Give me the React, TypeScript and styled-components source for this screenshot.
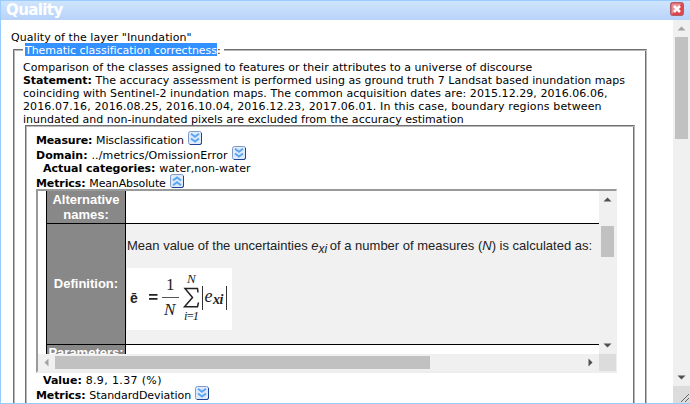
import React from "react";
import styled, { createGlobalStyle } from "styled-components";

const Global = createGlobalStyle`
  * { box-sizing: border-box; }
  html, body { margin: 0; padding: 0; overflow: hidden; background: #fff; }
`;

const Dialog = styled.div`
  width: 690px;
  height: 404px;
  display: flex;
  flex-direction: column;
  border: 1px solid #99ccff;
  border-right: 0;
  background: #fff;
  color: #000;
  overflow: hidden;
  font: 11px/15px Verdana, "DejaVu Sans", sans-serif;
`;

const TitleBar = styled.header`
  flex: 0 0 19px;
  display: flex;
  justify-content: space-between;
  padding: 1px 6px 0 5px;
  background: linear-gradient(#cfe5fd, #b9d2f9);
`;

const Title = styled.h1`
  margin: 0;
  color: #fff;
  font-size: 15px;
  line-height: 16px;
  letter-spacing: -0.6px;
`;

const Body = styled.div`
  flex: 1;
  min-height: 0;
  display: flex;
`;

const Content = styled.main`
  flex: 1;
  min-width: 0;
  overflow: hidden;
  padding: 10px 26px 0 10px;
`;

const Line = styled.div<{ $indent?: number }>`
  height: 13px;
  white-space: pre;
  padding-left: ${(p) => p.$indent ?? 0}px;
`;

const IconLine = styled.div`
  height: 15px;
  display: flex;
  padding-top: 2px;
  white-space: pre;
`;

const Run = styled.span<{ $track?: number }>`
  letter-spacing: ${(p) => p.$track ?? 0}px;
`;

const Strong = styled(Run)`
  font-weight: bold;
`;

const Group = styled.section`
  border: 1px solid;
  border-color: #707070 #b8b8b8 #b8b8b8 #707070;
  box-shadow: inset 1px 1px 0 #b8b8b8, inset -1px -1px 0 #707070;
`;

const Outer = styled(Group)`
  width: 634px;
  height: 500px;
  margin: 6px 0 0 2px;
  padding: 0 9px;
`;

const Legend = styled.div`
  width: 201px;
  height: 13px;
  margin: -7px 0 4px 0;
  padding-left: 2px;
  background: #fff;
  display: flex;
  white-space: pre;
`;

const Selected = styled.span`
  width: 192px;
  background: #3390ff;
  color: #fff;
`;

const Inner = styled(Group)`
  width: 610px;
  height: 400px;
  margin-left: 2px;
  padding: 5px 0 0 10px;
`;

const Frame = styled.div`
  width: 581px;
  height: 184px;
  border: 2px solid;
  border-width: 2px 1px 2px 2px;
  border-color: #9a9a9a #eeeeee #eeeeee #9a9a9a;
  display: grid;
  grid-template: 163px 17px / 561px 17px;
`;

const Viewport = styled.div`
  overflow: hidden;
  padding-left: 8px;
  font: 13px/15px "Liberation Sans", Arial, sans-serif;
`;

const TableRow = styled.div<{ $height: number; $shaded?: boolean }>`
  height: ${(p) => p.$height}px;
  display: grid;
  grid-template-columns: 80px 1fr;
  border-bottom: 1px solid #000;
  background: ${(p) => (p.$shaded ? "#f1f1f1" : "#fff")};
`;

const HeadCell = styled.div<{ $top: number }>`
  border: 1px solid #000;
  border-width: 0 1px;
  background: #888;
  color: #fff;
  font-weight: bold;
  text-align: center;
  padding-top: ${(p) => p.$top}px;
`;

const Cell = styled.div`
  padding: 14px 0 0 1px;
`;

const Sentence = styled.div`
  height: 30px;
  white-space: pre;
  color: #222;

  sub {
    font-size: 12px;
    font-style: italic;
    line-height: 0;
    vertical-align: -3px;
    margin-right: -1px;
  }
`;

const Corner = styled.div`
  display: flex;
  align-items: flex-end;
  justify-content: flex-end;
  background: #dcdcdc;
`;

const Track = styled.div<{ $row?: boolean }>`
  display: flex;
  flex-direction: ${(p) => (p.$row ? "row" : "column")};
  align-items: center;
  background: #f0f0f0;
  min-height: 0;
  flex: 1;
`;

const Thumb = styled.div<{ $w: number; $h: number }>`
  width: ${(p) => p.$w}px;
  height: ${(p) => p.$h}px;
  background: #c1c1c1;
`;

const Gap = styled.div<{ $size?: number }>`
  flex: ${(p) => (p.$size === undefined ? "1" : `0 0 ${p.$size}px`)};
`;

const ArrowBox = styled.div`
  flex: 0 0 17px;
  width: 17px;
  height: 17px;
  svg { display: block; }
`;

const MainScroll = styled.div`
  width: 17px;
  display: flex;
  flex-direction: column;
  ${Corner} { height: 17px; }
`;

const ToggleSvg = styled.svg`
  display: block;
  flex: none;
  margin: -2px 0 0 4px;
`;

const Art = styled.svg`
  display: block;
`;

const arrows = {
  up: "M4.5 10.5 L8.5 6.5 L12.5 10.5Z",
  down: "M4.5 6.5 L8.5 10.5 L12.5 6.5Z",
  left: "M10.5 4.5 L6.5 8.5 L10.5 12.5Z",
  right: "M6.5 4.5 L10.5 8.5 L6.5 12.5Z",
};

function Arrow({ dir, off }: { dir: keyof typeof arrows; off?: boolean }) {
  return (
    <ArrowBox>
      <svg width="17" height="17">
        <path d={arrows[dir]} fill={off ? "#a3a3a3" : "#505050"} />
      </svg>
    </ArrowBox>
  );
}

function Toggle({ open }: { open?: boolean }) {
  return (
    <ToggleSvg width="14" height="14" viewBox="0 0 14 14">
      <rect x="0.5" y="0.5" width="13" height="13" rx="2" fill="#dfeafa" stroke="#7f9acb" />
      <path d="M13.5 2V12Q13.5 13.5 12 13.5H2" fill="none" stroke="#1d4595" />
      <g transform={open ? "rotate(180 7 7)" : undefined} fill="none" stroke="#5aa5f2" strokeWidth="2">
        <path d="M3 2.8L7 5.8L11 2.8" />
        <path d="M3 7.5L7 10.5L11 7.5" />
      </g>
    </ToggleSvg>
  );
}

function CloseIcon() {
  return (
    <Art width="14" height="14" viewBox="0 0 14 14">
      <rect x="0.5" y="0.5" width="13" height="13" rx="2" fill="#e0454c" stroke="#a9606c" />
      <path d="M1.5 12.5V2.5Q1.5 1.5 2.5 1.5H11.5L7 7Z" fill="#ec8c90" />
      <path d="M4 4L10 10M10 4L4 10" stroke="#fff" strokeWidth="2.6" />
    </Art>
  );
}

function Formula() {
  return (
    <Art width="105" height="62" viewBox="0 0 105 62" fontFamily="Liberation Serif, serif" fill="#222">
      <rect width="105" height="62" fill="#fff" />
      <text x="3" y="34.5" fontFamily="Liberation Sans, sans-serif" fontWeight="bold" fontSize="14">ē</text>
      <path d="M22 26.8H30.5M22 30.8H30.5" stroke="#222" strokeWidth="1.8" />
      <text x="39" y="22" fontSize="17">1</text>
      <path d="M35 29.5H52" stroke="#555" />
      <text x="37" y="47" fontSize="17" fontStyle="italic">N</text>
      <text x="60" y="15" fontSize="13" fontStyle="italic">N</text>
      <path d="M71 24.5L70.5 20.5H58L65.5 29.5L57.5 38.7H70.5L71.5 34.5" fill="none" stroke="#222" strokeWidth="1.5" />
      <text x="57" y="52" fontSize="12.5" fontStyle="italic" textLength="15">i=1</text>
      <path d="M75.5 18V42M99.5 18V42" stroke="#333" />
      <text x="77.5" y="34" fontSize="18" fontStyle="italic">e</text>
      <text x="86" y="36" fontSize="14" fontStyle="italic" fontWeight="bold" textLength="10.5">xi</text>
    </Art>
  );
}

const statement: [string, number][] = [
  ["coinciding with Sentinel-2 inundation maps. The common acquisition dates are: 2015.12.29, 2016.06.06,", 0.055],
  ["2016.07.16, 2016.08.25, 2016.10.04, 2016.12.23, 2017.06.01. In this case, boundary regions between", 0.12],
  ["inundated and non-inundated pixels are excluded from the accuracy estimation", 0.02],
];

export default function App() {
  return (
    <>
      <Global />
      <Dialog>
        <TitleBar>
          <Title>Quality</Title>
          <CloseIcon />
        </TitleBar>
        <Body>
          <Content>
            <Line><Run $track={0.06}>Quality of the layer "Inundation"</Run></Line>
            <Outer>
              <Legend>
                <Selected><Run $track={-0.035}>Thematic classification correctness</Run></Selected>:
              </Legend>
              <Line><Run $track={0.02}>Comparison of the classes assigned to features or their attributes to a universe of discourse</Run></Line>
              <Line>
                <Strong $track={-0.1}>Statement: </Strong>
                <Run $track={0.015}>The accuracy assessment is performed using as ground truth 7 Landsat based inundation maps</Run>
              </Line>
              {statement.map(([text, track]) => (
                <Line key={text}><Run $track={track}>{text}</Run></Line>
              ))}
              <Inner>
                <IconLine>
                  <Strong $track={-0.15}>Measure: </Strong><Run $track={-0.09}>Misclassification</Run><Toggle />
                </IconLine>
                <IconLine>
                  <Strong>Domain: </Strong><Run $track={0.14}>../metrics/OmissionError</Run><Toggle />
                </IconLine>
                <Line $indent={7}>
                  <Strong $track={-0.02}>Actual categories: </Strong><Run $track={0.03}>water,non-water</Run>
                </Line>
                <IconLine>
                  <Strong $track={-0.1}>Metrics: </Strong><Run $track={-0.13}>MeanAbsolute</Run><Toggle open />
                </IconLine>
                <Frame>
                  <Viewport>
                    <TableRow $height={33}>
                      <HeadCell $top={1}>Alternative<br />names:</HeadCell>
                      <div />
                    </TableRow>
                    <TableRow $height={121} $shaded>
                      <HeadCell $top={52}>Definition:</HeadCell>
                      <Cell>
                        <Sentence>Mean value of the uncertainties <i>e</i><sub>xi</sub> of a number of measures (<i>N</i>) is calculated as:</Sentence>
                        <Formula />
                      </Cell>
                    </TableRow>
                    <TableRow $height={30}>
                      <HeadCell $top={0}>Parameters:</HeadCell>
                      <div />
                    </TableRow>
                  </Viewport>
                  <Track>
                    <Arrow dir="up" />
                    <Gap $size={18} />
                    <Thumb $w={13} $h={31} />
                    <Gap />
                    <Arrow dir="down" />
                  </Track>
                  <Track $row>
                    <Arrow dir="left" off />
                    <Thumb $w={375} $h={13} />
                    <Gap />
                    <Arrow dir="right" />
                  </Track>
                  <Corner />
                </Frame>
                <Line $indent={7}>
                  <Strong>Value: </Strong><Run $track={0.36}>8.9, 1.37 (%)</Run>
                </Line>
                <IconLine>
                  <Strong $track={-0.1}>Metrics: </Strong><Run $track={-0.05}>StandardDeviation</Run><Toggle />
                </IconLine>
              </Inner>
            </Outer>
          </Content>
          <MainScroll>
            <Track>
              <Arrow dir="up" off />
              <Thumb $w={13} $h={102} />
              <Gap />
              <Arrow dir="down" />
            </Track>
            <Corner>
              <Art width="10" height="10">
                <path d="M1 9L9 1M5 9L9 5" stroke="#666" />
              </Art>
            </Corner>
          </MainScroll>
        </Body>
      </Dialog>
    </>
  );
}
